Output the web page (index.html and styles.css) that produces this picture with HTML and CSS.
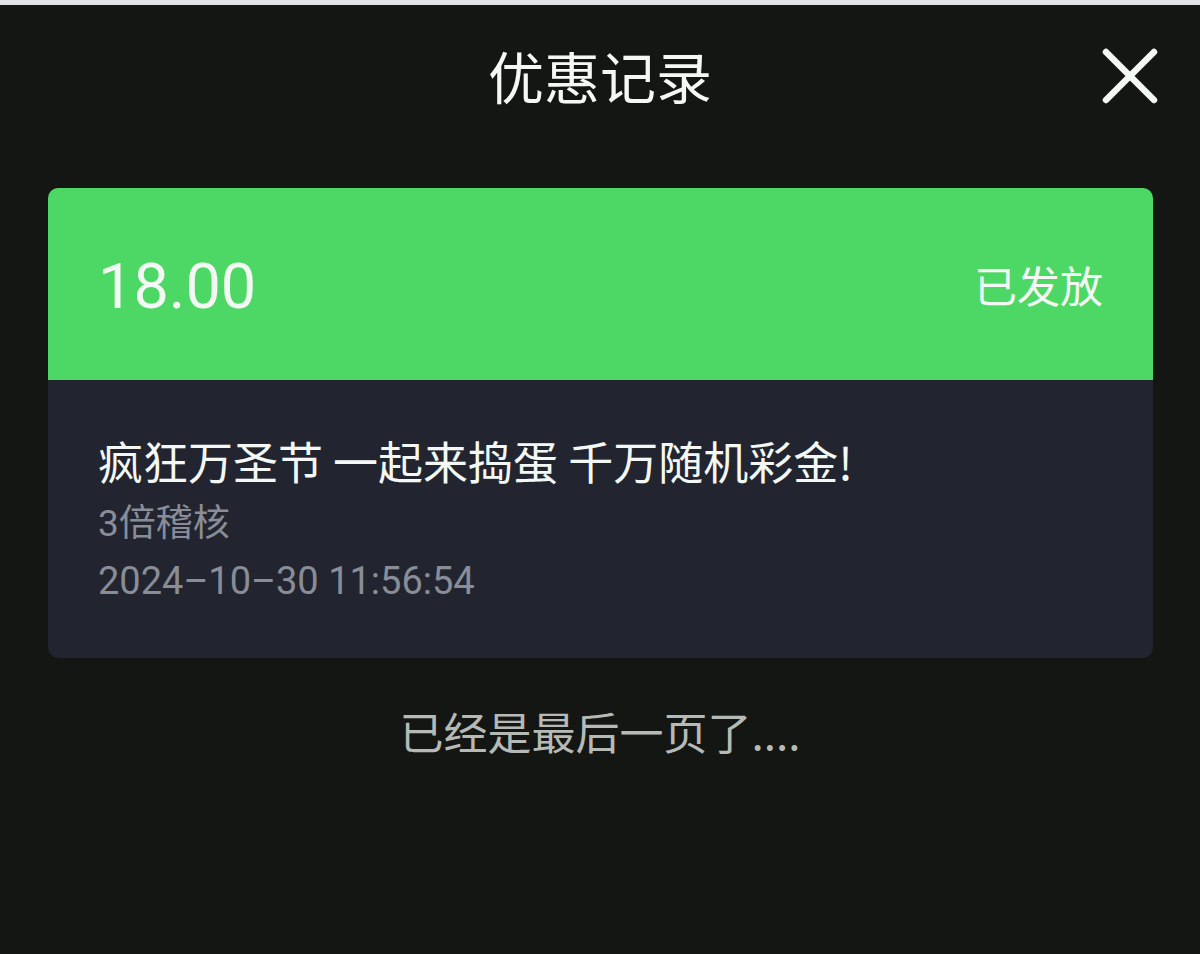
FILE: index.html
```html
<!DOCTYPE html>
<html lang="zh-CN">

<head>
  <meta charset="UTF-8">
  <meta name="viewport" content="width=device-width, initial-scale=1.0">
  <title>优惠记录</title>
  <link rel="stylesheet" href="styles.css">
</head>

<body>
  <div class="topStrip"></div>

  <div class="header">
    <h1 class="title">优惠记录</h1>
    <button class="closeBtn" aria-label="关闭">
      <svg width="56" height="56" viewBox="0 0 56 56">
        <path d="M4 4 L52 52 M52 4 L4 52" stroke="#f4f8f4" stroke-width="6.5" stroke-linecap="round" fill="none" />
      </svg>
    </button>
  </div>

  <div class="registros">
    <div class="cartao">
      <div class="cartaoTopo">
        <span class="valor">18.00</span>
        <span class="status">已发放</span>
      </div>
      <div class="cartaoCorpo">
        <div class="nomeEvento">疯狂万圣节 一起来捣蛋 千万随机彩金!</div>
        <div class="detalhe">3倍稽核</div>
        <div class="detalhe data">2024–10–30 11:56:54</div>
      </div>
    </div>
  </div>

  <p class="fimLista">已经是最后一页了....</p>
</body>

</html>
```

FILE: styles.css
```css
body {
  margin: 0;
  background: #141613;
  font-family: "Noto Sans CJK SC", "Noto Sans", sans-serif;
  color: #f4f8f4;
  height: 954px;
  overflow: hidden;
}

.topStrip {
  height: 5px;
  background: #e1e3e7;
}

.header {
  position: relative;
  height: 140px;
  display: flex;
  align-items: center;
  justify-content: center;
}

.title {
  margin: 0;
  font-size: 56px;
  font-weight: 400;
  line-height: 1;
}

/* botão de fechar no canto */
.closeBtn {
  position: absolute;
  right: 42px;
  top: 43px;
  background: none;
  border: 0;
  padding: 0;
  width: 56px;
  height: 56px;
  cursor: pointer;
}

.registros {
  padding: 43px 47px 0 48px;
}

.cartao {
  border-radius: 10px;
  overflow: hidden;
  background: #22252f;
}

.cartaoTopo {
  height: 192px;
  background: #4dd866;
  display: flex;
  align-items: center;
  justify-content: space-between;
  padding: 0 50px;
}

.valor {
  font-family: Roboto, "Noto Sans", sans-serif;
  font-size: 63px;
  line-height: 1;
  padding-top: 4px;
}

.status {
  font-size: 43px;
  line-height: 1;
}

.cartaoCorpo {
  height: 278px;
  box-sizing: border-box;
  padding: 58px 50px 0;
}

.nomeEvento {
  font-size: 45px;
  line-height: 1;
  height: 67px;
}

.detalhe {
  font-family: Roboto, "Noto Sans CJK SC", sans-serif;
  font-size: 37px;
  line-height: 1;
  color: #898d97;
  height: 57px;
}

.data {
  font-size: 38px;
}

.fimLista {
  margin: 51px 0 0;
  text-align: center;
  font-size: 44px;
  line-height: 1;
  color: #b6bab6;
}
```
